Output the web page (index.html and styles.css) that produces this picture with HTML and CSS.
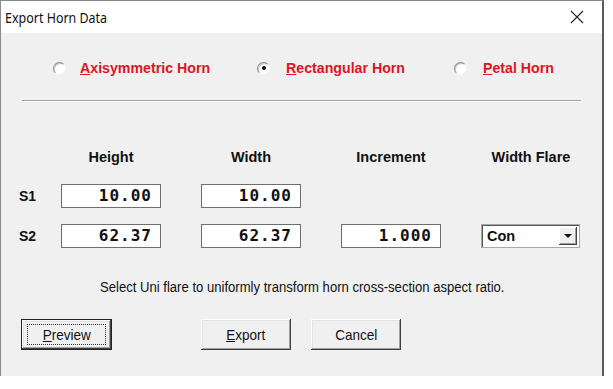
FILE: index.html
```html
<!DOCTYPE html>
<html lang="en">
<head>
    <meta charset="UTF-8">
    <title>Export Horn Data</title>
    <link rel="stylesheet" href="styles.css">
</head>
<body>
    <div class="window">
        <div class="titlebar">
            <span class="title">Export Horn Data</span>
            <svg class="close" width="14" height="14" viewBox="0 0 14 14">
                <path d="M1 1 L13 13 M13 1 L1 13" stroke="#222" stroke-width="1.1" fill="none"/>
            </svg>
        </div>

        <div class="client">
            <div class="horn-types">
                <div class="opt opt-axi"><span class="radio"></span><span class="opt-text"><u>A</u>xisymmetric Horn</span></div>
                <div class="opt opt-rect"><span class="radio checked"></span><span class="opt-text"><u>R</u>ectangular Horn</span></div>
                <div class="opt opt-petal"><span class="radio"></span><span class="opt-text"><u>P</u>etal Horn</span></div>
            </div>

            <div class="sep"></div>

            <div class="fields">
                <span></span>
                <span class="head">Height</span>
                <span class="head">Width</span>
                <span class="head">Increment</span>
                <span class="head">Width Flare</span>

                <span class="rowlabel">S1</span>
                <span class="num">10.00</span>
                <span class="num">10.00</span>
                <span></span>
                <span></span>

                <span class="rowlabel">S2</span>
                <span class="num">62.37</span>
                <span class="num">62.37</span>
                <span class="num">1.000</span>
                <span class="combo"><span class="combo-text">Con</span><span class="combo-btn"></span></span>
            </div>

            <p class="hint"><span class="narrow">Select Uni flare to uniformly transform horn cross-section aspect ratio.</span></p>

            <div class="buttons">
                <div class="btn btn-default"><span class="focus"><span class="narrow"><u>P</u>review</span></span></div>
                <div class="btn btn-export"><span class="narrow"><u>E</u>xport</span></div>
                <div class="btn"><span class="narrow">Cancel</span></div>
            </div>
        </div>
    </div>
</body>
</html>
```

FILE: styles.css
```css
body {
    margin: 0;
    background: #ffffff;
}

.window {
    width: 601px;
    border-top: 1px solid #8a8a8a;
    border-left: 1px solid #8a8a8a;
    border-right: 2px solid #5a5a5a;
}

.titlebar {
    height: 32px;
    background: #ffffff;
    display: flex;
    align-items: center;
    justify-content: space-between;
    padding: 0 18px 0 4px;
}

.title {
    display: inline-block;
    font-family: "Noto Sans", sans-serif;
    font-size: 14.5px;
    color: #111;
    transform: scaleX(0.86);
    transform-origin: left center;
    white-space: nowrap;
}

.close {
    display: block;
}

.client {
    height: 343px;
    background: #f0f0f0;
    padding-top: 27px;
    box-sizing: border-box;
}

/* radio row */
.horn-types {
    display: flex;
    align-items: center;
    height: 16px;
    padding-left: 52px;
}

.opt {
    display: flex;
    align-items: center;
    gap: 14px;
}

.opt-axi {
    width: 204px;
}

.opt-rect {
    width: 197px;
    gap: 16px;
}

.opt-petal {
    gap: 16px;
}

.radio {
    width: 13px;
    height: 13px;
    box-sizing: border-box;
    border-radius: 50%;
    background: #ffffff;
    border: 1px solid;
    border-color: #8c8c8c #f4f4f4 #f4f4f4 #8c8c8c;
    box-shadow: inset 1px 1px 0 #c8c8c8;
    position: relative;
}

.radio.checked::after {
    content: "";
    position: absolute;
    left: 3.5px;
    top: 3.5px;
    width: 4px;
    height: 4px;
    border-radius: 50%;
    background: #111;
}

.opt-text {
    font-family: "Liberation Sans", Arial, sans-serif;
    font-weight: bold;
    font-size: 14.2px;
    color: #e0141e;
}

.sep {
    margin: 24px 0 0 21px;
    width: 559px;
    border-top: 1px solid #a0a0a0;
    border-bottom: 1px solid #ffffff;
}

/* field grid */
.fields {
    display: grid;
    grid-template-columns: 43px 140px 140px 140px 100px;
    grid-template-rows: 20px 41px 40px;
    margin-top: 45px;
    padding-left: 17px;
    font-family: "Liberation Sans", Arial, sans-serif;
    font-weight: bold;
    font-size: 14.5px;
    color: #111;
}

.head {
    width: 100px;
    text-align: center;
    line-height: 20px;
}

.fields .rowlabel:nth-child(6),
.fields .rowlabel:nth-child(6) ~ span:nth-child(-n+10) {
    margin-top: 17px;
}

.fields .rowlabel:nth-child(11),
.fields .rowlabel:nth-child(11) ~ span {
    margin-top: 16px;
}

.rowlabel {
    line-height: 24px;
    font-size: 14px;
    padding-left: 1px;
}

.num {
    width: 100px;
    height: 24px;
    box-sizing: border-box;
    background: #ffffff;
    border: 1px solid #6e6e6e;
    text-align: right;
    padding-right: 8px;
    font-family: "DejaVu Sans Mono", monospace;
    font-weight: bold;
    font-size: 16px;
    letter-spacing: 1px;
    line-height: 22px;
    color: #111;
}

.combo {
    width: 99px;
    height: 24px;
    box-sizing: border-box;
    background: #ffffff;
    border: 1px solid #a8a8a8;
    box-shadow: inset 1px 1px 0 #555;
    display: flex;
    align-items: stretch;
    padding: 2px 2px 2px 5px;
}

.combo-text {
    flex: 1;
    font-size: 14.5px;
    line-height: 19px;
}

.combo-btn {
    width: 18px;
    background: #f0f0f0;
    box-shadow: inset -1px -1px 0 #404040, inset 1px 1px 0 #ffffff, inset -2px -2px 0 #a0a0a0;
    display: flex;
    align-items: center;
    justify-content: center;
}

.combo-btn::after {
    content: "";
    border-left: 4px solid transparent;
    border-right: 4px solid transparent;
    border-top: 4px solid #111;
    margin: 0 1px 1px 0;
}

.narrow {
    display: inline-block;
    transform: scaleX(0.9);
    white-space: nowrap;
}

.hint {
    margin: 30px 0 0 0;
    padding-left: 99px;
    font-family: "Liberation Sans", Arial, sans-serif;
    font-size: 14px;
    line-height: 18px;
    color: #111;
}

.hint .narrow {
    transform: scaleX(0.935);
    transform-origin: left center;
}

/* buttons */
.buttons {
    display: flex;
    margin-top: 23px;
    padding-left: 20px;
}

.btn {
    width: 90px;
    height: 31px;
    box-sizing: border-box;
    background: #f0f0f0;
    box-shadow: inset -1px -1px 0 #404040, inset 1px 1px 0 #ffffff, inset -2px -2px 0 #a0a0a0, inset 2px 2px 0 #e3e3e3;
    display: flex;
    align-items: center;
    justify-content: center;
    font-family: "Liberation Sans", Arial, sans-serif;
    font-size: 15px;
    color: #111;
}

.btn-default {
    width: 91px;
    border: 1px solid #222;
    margin-right: 89px;
}

.btn-export {
    margin-right: 20px;
}

.focus {
    width: 79px;
    height: 21px;
    box-sizing: border-box;
    border: 1px dotted #333;
    display: flex;
    align-items: center;
    justify-content: center;
}
```
